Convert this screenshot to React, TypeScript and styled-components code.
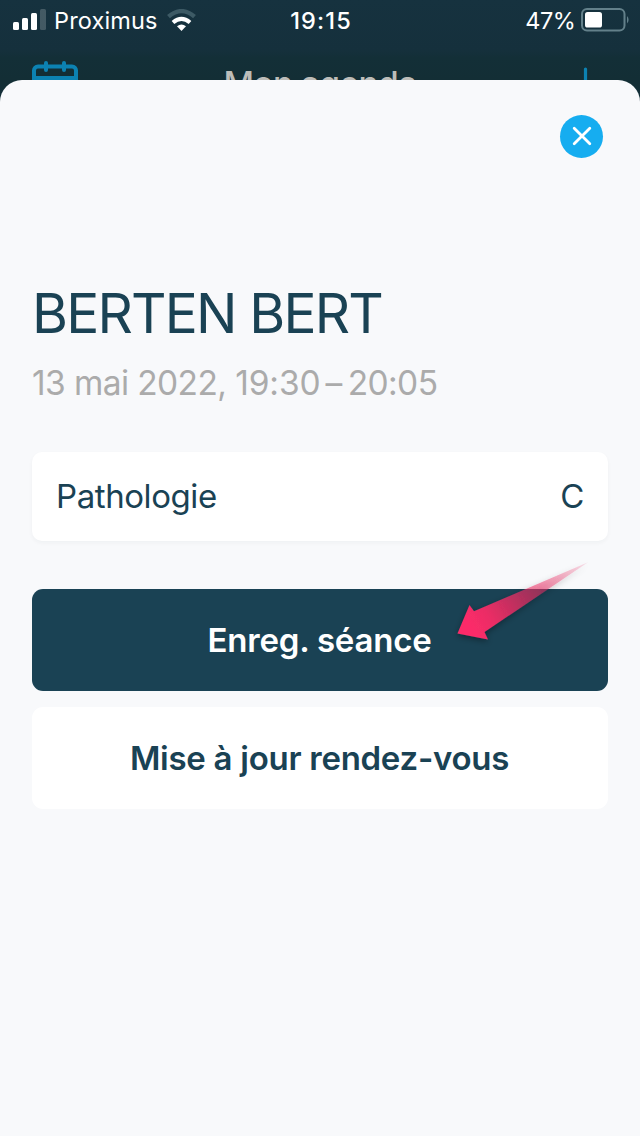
import React from "react";
import styled, { createGlobalStyle } from "styled-components";

const GlobalStyle = createGlobalStyle`
  *, *::before, *::after { box-sizing: border-box; }
  body {
    margin: 0;
    background: #132f37;
    font-family: Inter, "Liberation Sans", sans-serif;
    -webkit-font-smoothing: antialiased;
  }
`;

const Screen = styled.div`
  width: 640px;
  height: 1136px;
  display: flex;
  flex-direction: column;
  overflow: hidden;
  background: linear-gradient(#16323f 0, #15303c 50px, #132f37 58px, #132e35 80px, #132f3a 110px);
`;

const StatusBar = styled.div`
  flex: none;
  height: 41px;
  display: grid;
  grid-template-columns: 1fr auto 1fr;
  align-items: center;
  padding: 0 11px 0 13px;
  color: #fff;
`;

const StatusGroup = styled.div<{ $end?: boolean }>`
  display: flex;
  align-items: center;
  justify-content: ${(p) => (p.$end ? "flex-end" : "flex-start")};
`;

const StatusText = styled.span<{ $weight?: number; $spacing?: number }>`
  font-size: 23.5px;
  line-height: 41px;
  font-weight: ${(p) => p.$weight ?? 400};
  letter-spacing: ${(p) => p.$spacing ?? 0}px;
  white-space: nowrap;
`;

const SignalIcon = styled.svg`
  margin: -2px 7px 0 0;
`;

const WifiIcon = styled.svg`
  margin: -1px 0 0 9px;
`;

const BatteryIcon = styled.svg`
  margin-left: 5.5px;
  margin-top: -2px;
`;

const NavBar = styled.div`
  flex: none;
  height: 88px;
  display: grid;
  grid-template-columns: 46px 1fr 46px;
  padding: 0 32px;
`;

const CalendarIcon = styled.svg`
  margin-top: 19px;
`;

const PlusIcon = styled.svg`
  margin-top: 26px;
  justify-self: end;
`;

const NavTitle = styled.div`
  text-align: center;
  font-size: 33.5px;
  line-height: 87px;
  font-weight: 550;
  letter-spacing: -0.6px;
  color: #bdbdb9;
`;

const Sheet = styled.main`
  position: relative;
  flex: 1;
  margin-top: -49px;
  padding: 35px 32px 0;
  border-radius: 22px 22px 0 0;
  background: #f8f9fb;
  color: #1a4254;
`;

const SheetHeader = styled.div`
  display: flex;
  justify-content: flex-end;
  height: 44px;
  padding-right: 5px;
`;

const CloseButton = styled.button`
  width: 43px;
  height: 43px;
  padding: 0 0 1px;
  border: 0;
  border-radius: 50%;
  background: #16adf0;
  display: grid;
  place-items: center;
`;

const PatientName = styled.h1`
  margin: 119px 0 0;
  font-size: 55px;
  line-height: 70px;
  font-weight: 400;
  letter-spacing: -1.8px;
  white-space: nowrap;
`;

const Appointment = styled.p`
  margin: 10px 0 0;
  font-size: 33.5px;
  line-height: 51px;
  letter-spacing: -0.6px;
  color: #ababab;
  white-space: nowrap;
`;

const StartTime = styled.span`
  letter-spacing: -0.1px;
`;

const RangeDash = styled.span`
  margin: 0 6px 0 5px;
`;

const InfoCard = styled.div`
  margin-top: 43px;
  height: 89px;
  padding: 0 24px 2px 24px;
  display: flex;
  align-items: center;
  justify-content: space-between;
  border-radius: 10px;
  background: #fff;
  box-shadow: 0 2px 4px rgba(30, 40, 60, 0.04);
  font-size: 33px;
  letter-spacing: -0.42px;
`;

const Actions = styled.div`
  margin-top: 48px;
  display: flex;
  flex-direction: column;
  gap: 16px;
`;

const ActionButton = styled.button<{ $primary?: boolean; $spacing: number }>`
  height: 102px;
  padding: 0 1px 0 0;
  border: 0;
  border-radius: 11px;
  font: 570 33px/102px Inter, "Liberation Sans", sans-serif;
  letter-spacing: ${(p) => p.$spacing}px;
  background: ${(p) => (p.$primary ? "#1a4254" : "#fff")};
  color: ${(p) => (p.$primary ? "#fff" : "#1a4254")};
`;

const Pointer = styled.svg`
  position: absolute;
  left: 450px;
  top: 475px;
  overflow: visible;
  pointer-events: none;
`;

export default function App() {
  return (
    <>
      <GlobalStyle />
      <Screen>
        <StatusBar>
          <StatusGroup>
            <SignalIcon width="34" height="21" viewBox="0 0 34 21">
              <g fill="#fff">
                <rect x="0" y="13" width="6" height="8" rx="1.5" />
                <rect x="9" y="9" width="6" height="12" rx="1.5" />
                <rect x="18" y="4" width="6" height="17" rx="1.5" />
                <rect x="27" y="0" width="6" height="21" rx="1.5" opacity=".2" />
              </g>
            </SignalIcon>
            <StatusText $spacing={0.15}>Proximus</StatusText>
            <WifiIcon width="30" height="22" viewBox="0 0 30 22">
              <path d="M1.5 7.7 Q14.5-3.5 27.5 7.7" fill="none" stroke="#3d5a65" strokeWidth="4.3" />
              <path d="M6 13.5 Q14.5 6.3 23 13.5" fill="none" stroke="#fff" strokeWidth="4.1" />
              <path d="M10 17.3 Q14.5 13.5 19 17.3 L14.5 22Z" fill="#fff" />
            </WifiIcon>
          </StatusGroup>
          <StatusText $weight={550} $spacing={1.15}>19:15</StatusText>
          <StatusGroup $end>
            <StatusText $spacing={-0.4}>47%</StatusText>
            <BatteryIcon width="48" height="24" viewBox="0 0 48 24">
              <rect x="1" y="1" width="42.5" height="21.5" rx="5" fill="none" stroke="#63808a" strokeWidth="2" />
              <rect x="4" y="4" width="17" height="15.5" rx="2.6" fill="#fff" />
              <path d="M46 8 Q49.2 11.7 46 15.6Z" fill="#63808a" />
            </BatteryIcon>
          </StatusGroup>
        </StatusBar>
        <NavBar>
          <CalendarIcon width="46" height="46" viewBox="0 0 46 46" fill="none" stroke="#0c82b2" strokeWidth="4" strokeLinecap="round">
            <rect x="2" y="6.5" width="42" height="36" rx="4" />
            <path d="M2 18H44M14 3V10M32 3V10" />
          </CalendarIcon>
          <NavTitle>Mon agenda</NavTitle>
          <PlusIcon width="46" height="40" viewBox="0 0 46 40" stroke="#0c82b2" strokeWidth="3.2" strokeLinecap="round">
            <path d="M23.5 2V36M6.5 19H40.5" />
          </PlusIcon>
        </NavBar>
        <Sheet>
          <SheetHeader>
            <CloseButton aria-label="Fermer">
              <svg width="20" height="20" viewBox="0 0 20 20" stroke="#fff" strokeWidth="2.8" strokeLinecap="round">
                <path d="M2.2 2.2L17.8 17.8M17.8 2.2L2.2 17.8" />
              </svg>
            </CloseButton>
          </SheetHeader>
          <PatientName>BERTEN BERT</PatientName>
          <Appointment>
            13 mai 2022, <StartTime>19:30</StartTime>
            <RangeDash>–</RangeDash>20:05
          </Appointment>
          <InfoCard>
            <span>Pathologie</span>
            <span>C</span>
          </InfoCard>
          <Actions>
            <ActionButton $primary $spacing={-0.2}>Enreg. séance</ActionButton>
            <ActionButton $spacing={-0.27}>Mise à jour rendez-vous</ActionButton>
          </Actions>
          <Pointer width="145" height="95" viewBox="450 555 145 95">
            <defs>
              <linearGradient id="pointerFill" gradientUnits="userSpaceOnUse" x1="472" y1="628" x2="588" y2="562">
                <stop offset="0" stopColor="#fb2c69" />
                <stop offset="0.15" stopColor="#f62d67" stopOpacity="0.94" />
                <stop offset="1" stopColor="#e92d62" stopOpacity="0.12" />
              </linearGradient>
              <filter id="pointerShadow" x="-20%" y="-20%" width="140%" height="150%">
                <feDropShadow dx="0" dy="2" stdDeviation="3" floodColor="#000" floodOpacity="0.4" />
              </filter>
            </defs>
            <path d="M457.5 633.5L469.5 605L474 611.3L588 562.3L484.5 632L488 639.5Z" fill="url(#pointerFill)" filter="url(#pointerShadow)" />
          </Pointer>
        </Sheet>
      </Screen>
    </>
  );
}
